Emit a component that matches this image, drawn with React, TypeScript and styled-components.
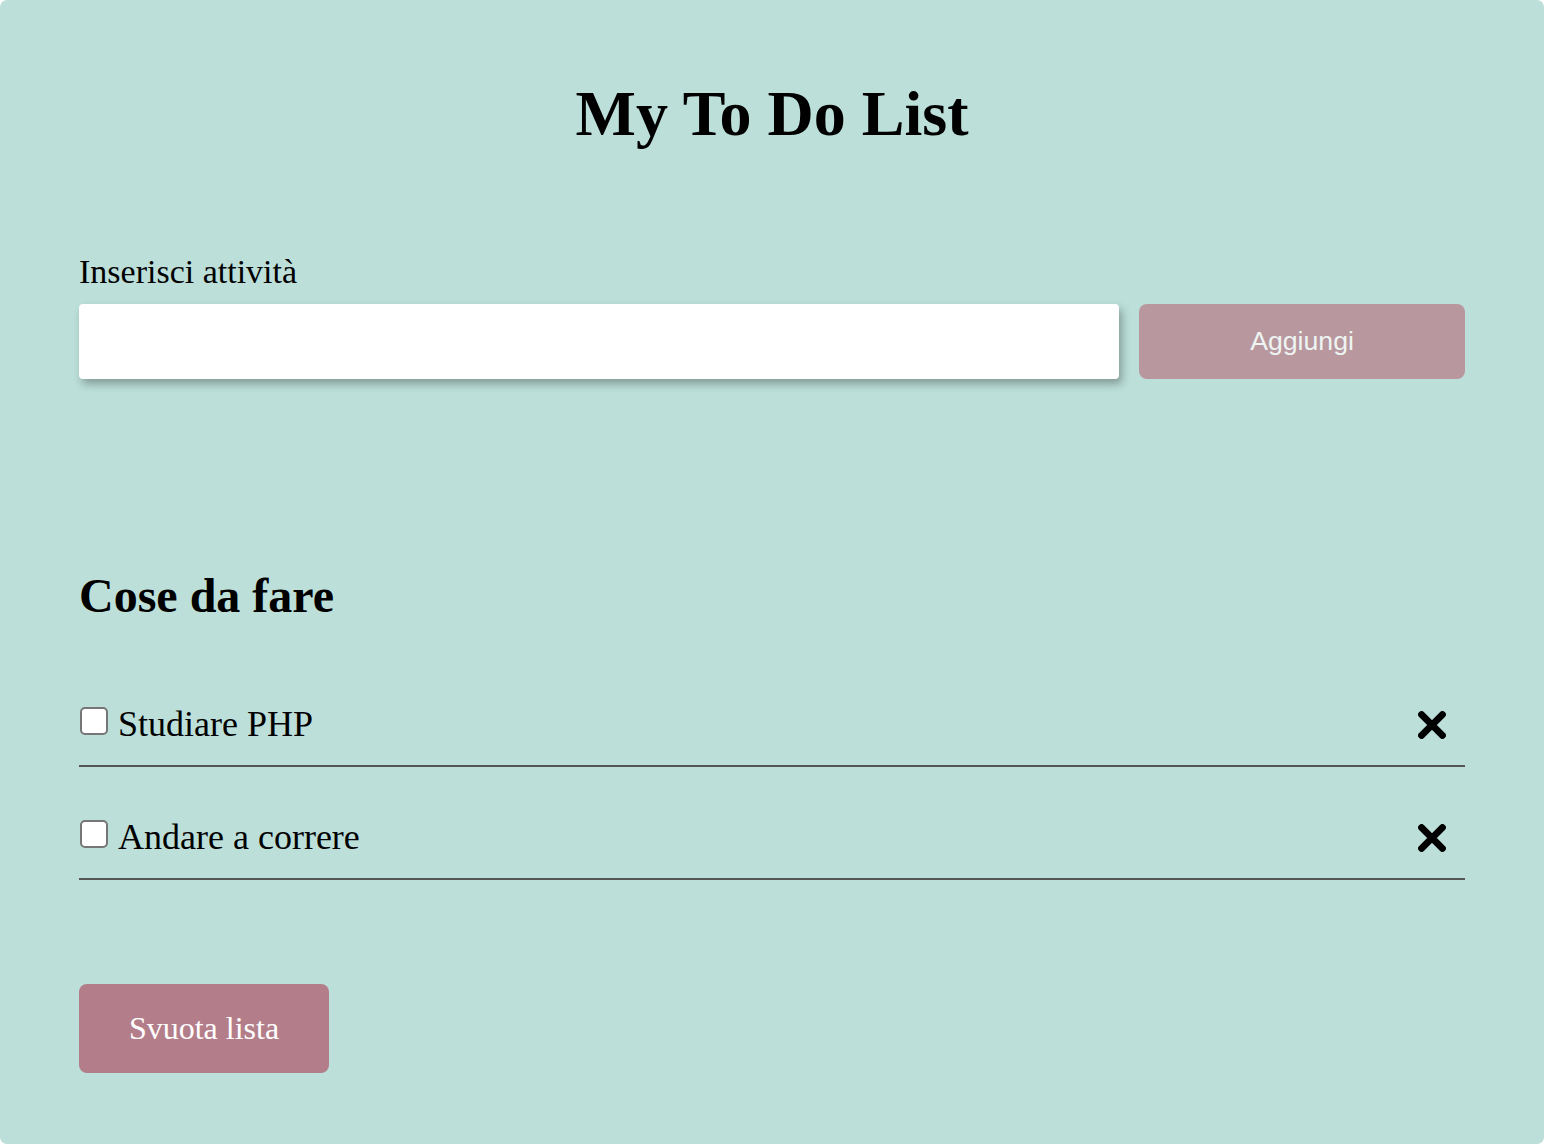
import React, { useState } from "react";
import styled, { createGlobalStyle } from "styled-components";

const GlobalStyle = createGlobalStyle`
  html, body { margin: 0; padding: 0; background: #ffffff; }
  * { box-sizing: border-box; }
`;

const Page = styled.div`
  min-height: 1144px;
  background: #bcdfd9;
  border-radius: 7px;
  padding: 77px 79px 40px;
  font-family: "Liberation Serif", "Times New Roman", serif;
  color: #000;
`;

const Title = styled.h1`
  margin: 0;
  font-size: 64px;
  line-height: 1.15;
  font-weight: 700;
  text-align: center;
`;

const Label = styled.label`
  display: block;
  margin-top: 101px;
  font-size: 34px;
  line-height: 1.15;
`;

const Form = styled.div`
  display: flex;
  gap: 20px;
  margin-top: 13px;
`;

const Input = styled.input`
  flex: 1;
  height: 75px;
  border: none;
  border-radius: 4px;
  background: #ffffff;
  box-shadow: 3px 5px 9px rgba(0, 0, 0, 0.3);
  outline: none;
  font-size: 30px;
  padding: 0 16px;
`;

const AddButton = styled.button`
  width: 326px;
  height: 75px;
  border: none;
  border-radius: 8px;
  background: #b8989e;
  color: #eef4f2;
  font-family: "Liberation Sans", Arial, sans-serif;
  font-size: 26.67px;
  cursor: pointer;
`;

const Subtitle = styled.h2`
  margin: 189px 0 31px;
  font-size: 48px;
  line-height: 1.15;
  font-weight: 700;
`;

const List = styled.ul`
  list-style: none;
  margin: 0;
  padding: 0;
`;

const Row = styled.li`
  display: flex;
  align-items: flex-start;
  padding: 50px 0 19.6px;
  border-bottom: 2px solid #555555;
`;

const Check = styled.input`
  appearance: none;
  width: 28px;
  height: 28px;
  margin: 3px 10px 0 1px;
  border: 2px solid #767676;
  border-radius: 5px;
  background: #ffffff;
  flex: none;
  cursor: pointer;
  &:checked {
    background: #767676;
  }
`;

const Text = styled.span<{ $done: boolean }>`
  flex: 1;
  font-size: 36px;
  line-height: 1.15;
  text-decoration: ${(p) => (p.$done ? "line-through" : "none")};
`;

const Remove = styled.button`
  flex: none;
  width: 28px;
  height: 28px;
  margin: 7px 19px 0 0;
  padding: 0;
  border: none;
  background: transparent;
  cursor: pointer;
  display: flex;
`;

const ClearButton = styled.button`
  margin-top: 104px;
  width: 250px;
  height: 89px;
  border: none;
  border-radius: 8px;
  background: #b37e8a;
  color: #ffffff;
  font-family: "Liberation Serif", "Times New Roman", serif;
  font-size: 32px;
  cursor: pointer;
`;

const XIcon = () => (
  <svg width="28" height="28" viewBox="0 0 28 28">
    <path
      d="M3.6 3.6 L24.4 24.4 M24.4 3.6 L3.6 24.4"
      stroke="#000"
      strokeWidth="7"
      strokeLinecap="round"
      fill="none"
    />
  </svg>
);

type Item = { id: number; text: string; done: boolean };

export default function App() {
  const [items, setItems] = useState<Item[]>([
    { id: 1, text: "Studiare PHP", done: false },
    { id: 2, text: "Andare a correre", done: false },
  ]);
  const [value, setValue] = useState("");

  const add = () => {
    if (!value.trim()) return;
    setItems([...items, { id: Date.now(), text: value.trim(), done: false }]);
    setValue("");
  };

  return (
    <>
      <GlobalStyle />
      <Page>
        <Title>My To Do List</Title>
        <Label htmlFor="task">Inserisci attività</Label>
        <Form>
          <Input id="task" value={value} onChange={(e) => setValue(e.target.value)} />
          <AddButton onClick={add}>Aggiungi</AddButton>
        </Form>
        <Subtitle>Cose da fare</Subtitle>
        <List>
          {items.map((it) => (
            <Row key={it.id}>
              <Check
                type="checkbox"
                checked={it.done}
                onChange={() =>
                  setItems(items.map((x) => (x.id === it.id ? { ...x, done: !x.done } : x)))
                }
              />
              <Text $done={it.done}>{it.text}</Text>
              <Remove onClick={() => setItems(items.filter((x) => x.id !== it.id))}>
                <XIcon />
              </Remove>
            </Row>
          ))}
        </List>
        <ClearButton onClick={() => setItems([])}>Svuota lista</ClearButton>
      </Page>
    </>
  );
}
